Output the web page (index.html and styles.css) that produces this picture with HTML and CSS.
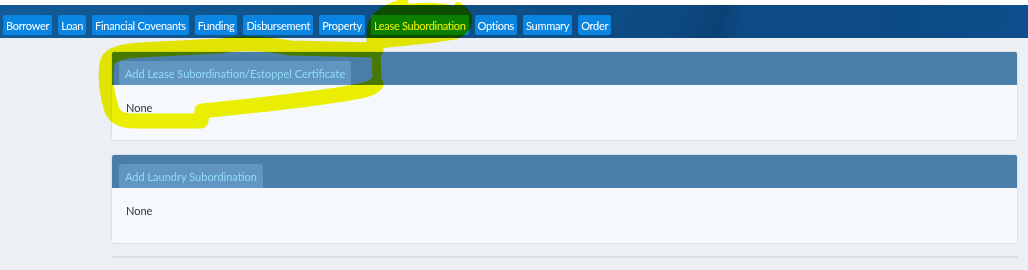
FILE: index.html
```html
<!DOCTYPE html>
<html lang="en">
<head>
    <meta charset="UTF-8">
    <meta name="viewport" content="width=device-width, initial-scale=1.0">
    <link rel="stylesheet" href="styles.css">
    <title>Lease Subordination</title>
</head>
<body>
    <nav class="topbar">
        <a class="tab">Borrower</a>
        <a class="tab">Loan</a>
        <a class="tab">Financial Covenants</a>
        <a class="tab">Funding</a>
        <a class="tab">Disbursement</a>
        <a class="tab">Property</a>
        <a class="tab active">Lease Subordination</a>
        <a class="tab">Options</a>
        <a class="tab">Summary</a>
        <a class="tab">Order</a>
    </nav>

    <div class="content">
        <div class="panel">
            <div class="panel-head">
                <span class="panel-tab">Add Lease Subordination/Estoppel Certificate</span>
            </div>
            <div class="panel-body">None</div>
        </div>
        <div class="panel">
            <div class="panel-head">
                <span class="panel-tab">Add Laundry Subordination</span>
            </div>
            <div class="panel-body">None</div>
        </div>
        <div class="rule"></div>
    </div>

    <!-- marker scribble on top of the screenshot -->
    <svg class="marker" width="1028" height="270" viewBox="0 0 1028 270">
        <path d="M372 42 C370 28 376 12 400 5 C425 1 450 2 462 10 C472 18 470 30 455 35 C430 39 400 41 372 44 Z" fill="#f4f400"/>
        <path d="M404 3 C386 8 372 16 371 30 L371 46" fill="none" stroke="#f4f400" stroke-width="9" stroke-linecap="round"/>
        <path d="M458 6 C472 14 472 28 456 35 C430 40 400 42 374 45" fill="none" stroke="#f4f400" stroke-width="8" stroke-linecap="round"/>
        <path d="M376 50 L290 48 C262 43 240 42 220 46 L140 50 C120 51 108 55 107 64 C105 78 107 96 112 110 C115 118 122 121 135 121 L201 121 L202 111 C240 107 290 102 330 96 C356 92 372 90 376 84"
              fill="none" stroke="#f4f400" stroke-width="15" stroke-linejoin="round" stroke-linecap="round"/>
        <path d="M376 46 L377 86" fill="none" stroke="#f4f400" stroke-width="9" stroke-linecap="round"/>
    </svg>
</body>
</html>
```

FILE: styles.css
```css
body{
    margin: 0;
    background: #eceff3;
    font-family: Lato, "Open Sans", sans-serif;
    font-size: 11px;
    position: relative;
    height: 270px;
    overflow: hidden;
}
.topbar{
    display: flex;
    gap: 6px;
    height: 23px;
    padding: 10px 3px 0;
    border-top: 5px solid #ffffff;
    background: linear-gradient(105deg, #135b97 0%, #0f4f88 40%, #0d4a82 65%, #0b4275 70%, #0c4b86 72%, #0c4b86 85%, #0b4a84 86%, #0d4e8c 100%);
}
.tab{
    display: flex;
    align-items: center;
    height: 20px;
    padding: 0 3px;
    background: #0b85e2;
    color: #ffffff;
    border-radius: 2px;
    letter-spacing: -0.3px;
    white-space: nowrap;
}
.content{
    padding: 13px 10px 0 111px;
}
.panel{
    margin-bottom: 13px;
    border: 1px solid #dce2e8;
    border-radius: 3px;
    overflow: hidden;
    background: #f5f9fd;
}
.panel-head{
    display: flex;
    height: 24px;
    padding: 9px 7px 0;
    background: #4a7ea8;
}
.panel-tab{
    display: flex;
    align-items: center;
    padding: 0 6px;
    background: #6196c2;
    color: #90dcf5;
    border-radius: 3px 3px 0 0;
}
.panel-body{
    height: 55px;
    padding: 16px 0 0 14px;
    box-sizing: border-box;
    color: #333333;
}
.rule{
    height: 2px;
    margin-top: -1px;
    background: #dde1e6;
}
.marker{
    position: absolute;
    left: 0;
    top: 0;
    pointer-events: none;
    mix-blend-mode: multiply;
}
```
